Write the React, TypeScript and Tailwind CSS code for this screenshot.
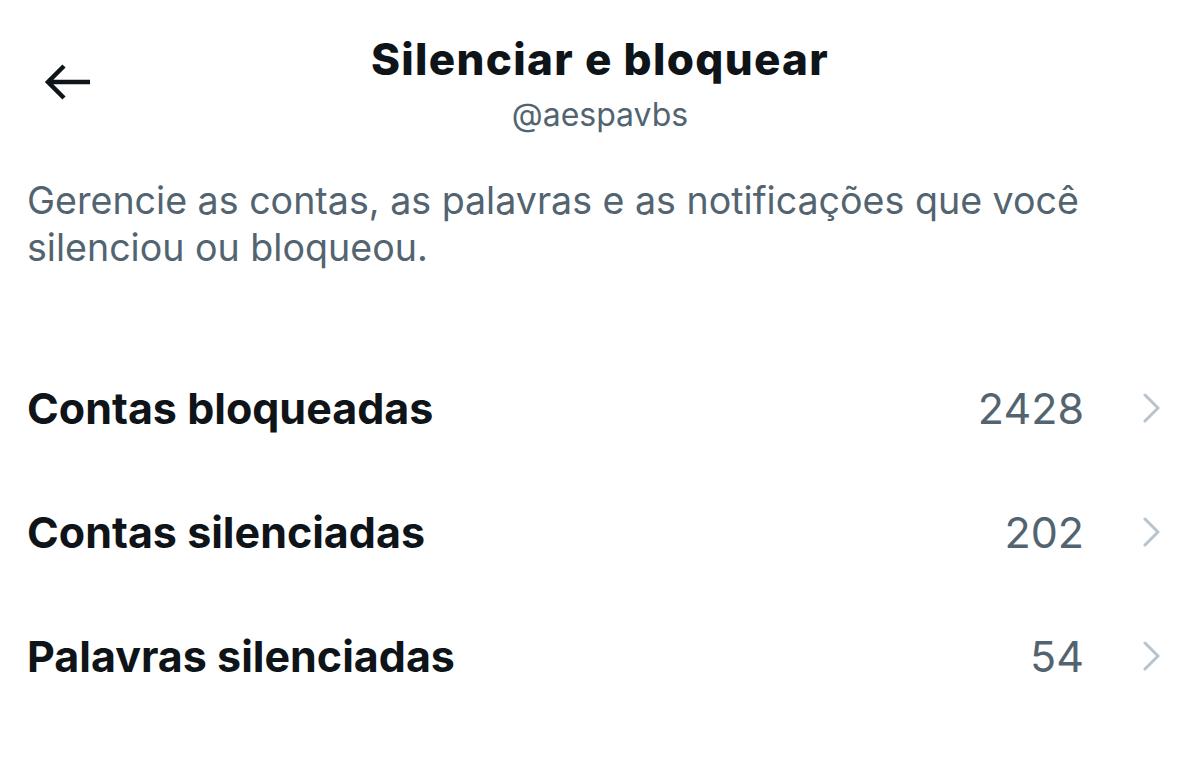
import React from "react";

const rows = [
  { label: "Contas bloqueadas", value: "2428" },
  { label: "Contas silenciadas", value: "202" },
  { label: "Palavras silenciadas", value: "54" },
];

function Chevron() {
  return (
    <svg width="17" height="30" viewBox="0 0 17 30" fill="none">
      <path d="M2 2 L15 15 L2 28" stroke="#b9c3cb" strokeWidth="3" strokeLinecap="round" strokeLinejoin="round" />
    </svg>
  );
}

export default function App() {
  return (
    <div className="w-[1200px] h-[758px] bg-white overflow-hidden" style={{ fontFamily: "Inter, 'Noto Sans', sans-serif" }}>
      <div className="relative flex flex-col items-center pt-[33px]">
        <button className="absolute left-[40px] top-[60px]">
          <svg width="54" height="44" viewBox="0 0 54 44" fill="none">
            <path d="M50 22 H8 M24 6 L8 22 L24 38" stroke="#0f1419" strokeWidth="4.5" strokeLinecap="butt" strokeLinejoin="miter" />
          </svg>
        </button>
        <h1 className="text-[44px] leading-[52px] font-extrabold text-[#0f1419] tracking-[1.3px]">Silenciar e bloquear</h1>
        <div className="mt-[10px] text-[32px] leading-[40px] text-[#536471]">@aespavbs</div>
      </div>
      <p className="px-[27px] mt-[42px] text-[37.6px] leading-[47px] text-[#536471] w-[1140px]">
        Gerencie as contas, as palavras e as notificações que você silenciou ou bloqueou.
      </p>
      <div className="mt-[75px] flex flex-col">
        {rows.map((r) => (
          <div key={r.label} className="h-[124px] flex items-center pl-[27px] pr-[40px]">
            <span className="flex-1 text-[43px] leading-[52px] font-bold text-[#0f1419]">{r.label}</span>
            <span className="text-[43px] leading-[52px] text-[#536471] mr-[59px]">{r.value}</span>
            <Chevron />
          </div>
        ))}
      </div>
    </div>
  );
}
